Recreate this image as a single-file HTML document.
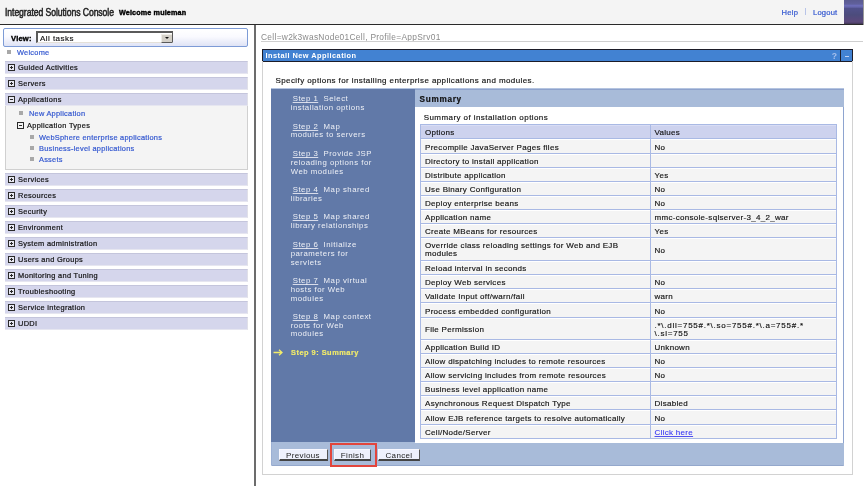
<!DOCTYPE html><html><head><meta charset='utf-8'><style>
*{margin:0;padding:0;box-sizing:border-box}
html,body{width:864px;height:486px;overflow:hidden;background:#fff;font-family:"Liberation Sans", sans-serif;}
body{filter:blur(0.3px)}
.a{position:absolute;white-space:nowrap}
.t{font-size:8px;letter-spacing:0.3px;color:#111;line-height:1;-webkit-text-stroke:0.15px #111}
.nav{font-size:7.4px;letter-spacing:0.32px;color:#111;line-height:1;-webkit-text-stroke:0.2px}
.lnk{color:#3458d0;letter-spacing:0.25px}
.bar{position:absolute;left:5px;width:243px;height:13px;background:#d5d6ec;border-top:1px solid #c4c5dc;border-bottom:1px solid #e6e6f0;border-right:1px solid #e0e0e8}
.ico{position:absolute;left:8px;width:7px;height:7px;border:1px solid #333;background:#e4e4f0}
.ico:before{content:"";position:absolute;left:0px;top:2px;width:5px;height:1px;background:#333}
.ico.p:after{content:"";position:absolute;left:2px;top:0px;width:1px;height:5px;background:#333}
.bul{position:absolute;width:4px;height:4px;background:#a8a8a8}
.row{position:absolute;left:421px;width:416px;background:#f4f4f4;border-bottom:1px solid #a9b9e4}
.step{font-size:7.8px;letter-spacing:0.5px;color:#eef0f6;line-height:8.7px}
.step u{text-decoration:underline;text-decoration-skip-ink:none;text-decoration-color:#d8dcea;text-underline-offset:1px}
.btn{position:absolute;top:448.5px;height:12.5px;background:#eef0fc;border:1px solid #f8f8ff;border-right:1px solid #555;border-bottom:2px solid #444;font-size:8px;letter-spacing:0.35px;color:#222;text-align:center;line-height:11.5px;padding-top:0.5px}
</style></head><body>
<div class='a' style='left:0;top:0;width:864px;height:24px;background:#f4f4f4'></div>
<div class='a' style='left:0;top:24px;width:863px;height:1px;background:#2a2a2a'></div>
<div class='a' style='left:5px;top:6.2px;font-size:10.5px;line-height:12px;color:#222;transform:scaleX(0.825);transform-origin:0 0;letter-spacing:-0.1px;-webkit-text-stroke:0.5px #222'>Integrated Solutions Console</div>
<div class='a' style='left:119px;top:9px;font-size:7.2px;line-height:8px;font-weight:bold;color:#000;letter-spacing:0.15px;-webkit-text-stroke:0.4px #000'>Welcome muleman</div>
<div class='a lnk' style='left:781.5px;top:8.7px;font-size:7.6px;line-height:8px;letter-spacing:0.3px;-webkit-text-stroke:0.2px #3458d0'>Help</div>
<div class='a' style='left:805px;top:8px;width:1px;height:7px;background:#b8c4e8'></div>
<div class='a lnk' style='left:813px;top:8.7px;font-size:7.6px;line-height:8px;letter-spacing:0.2px;-webkit-text-stroke:0.2px #3458d0'>Logout</div>
<div class='a' style='left:844px;top:0;width:19px;height:24px;background:linear-gradient(180deg,#5a5a90 0px,#60609c 4px,#6c6cb8 5.5px,#6666ac 7px,#50508a 8.5px,#4c4c7c 15px,#56497c 19px,#5c4a7a 22px,#403654 24px)'></div><div class='a' style='left:863px;top:0;width:1px;height:25px;background:#9a9a9a'></div>
<div class='a' style='left:3px;top:28px;width:245px;height:19px;border:1px solid #7d9bd6;border-radius:2px;background:linear-gradient(180deg,#ffffff 0%,#fafaff 45%,#dfe3f5 100%)'></div>
<div class='a' style='left:11px;top:34.8px;font-size:7.6px;line-height:7px;font-weight:bold;color:#000;letter-spacing:0.2px;-webkit-text-stroke:0.35px #000'>View:</div>
<div class='a' style='left:36px;top:31px;width:137px;height:12px;background:#fff;border-top:2px solid #5a5a5a;border-left:2px solid #5a5a5a;border-right:1.5px solid #5a5a5a;border-bottom:1px solid #e4e0d8'></div>
<div class='a' style='left:40px;top:35px;font-size:8px;line-height:7px;color:#111;letter-spacing:0.45px;-webkit-text-stroke:0.15px #111'>All tasks</div>
<div class='a' style='left:161px;top:33.5px;width:10.5px;height:9px;background:#d4d0c8;border-top:1px solid #eeece6;border-left:1px solid #eeece6;border-bottom:1.5px solid #5a5a5a'></div>
<div class='a' style='left:164.6px;top:37.3px;width:0;height:0;border-left:2px solid transparent;border-right:2px solid transparent;border-top:2.5px solid #111'></div>
<div class='bul' style='left:7px;top:50px'></div>
<div class='a nav lnk' style='left:17px;top:48.8px'>Welcome</div>
<div class='bar' style='top:61px'></div>
<svg class='a' style='left:8px;top:63.5px' width='7' height='7' viewBox='0 0 7 7'><rect x='0.5' y='0.5' width='6' height='6' fill='#e8e8f2' stroke='#2a2a2a' stroke-width='1'/><path d='M2 3.5H5' stroke='#2a2a2a' stroke-width='1'/><path d='M3.5 2V5' stroke='#2a2a2a' stroke-width='1'/></svg>
<div class='a nav' style='left:18px;top:63.5px'>Guided Activities</div>
<div class='bar' style='top:77px'></div>
<svg class='a' style='left:8px;top:79.5px' width='7' height='7' viewBox='0 0 7 7'><rect x='0.5' y='0.5' width='6' height='6' fill='#e8e8f2' stroke='#2a2a2a' stroke-width='1'/><path d='M2 3.5H5' stroke='#2a2a2a' stroke-width='1'/><path d='M3.5 2V5' stroke='#2a2a2a' stroke-width='1'/></svg>
<div class='a nav' style='left:18px;top:79.5px'>Servers</div>
<div class='bar' style='top:93px'></div>
<svg class='a' style='left:8px;top:95.5px' width='7' height='7' viewBox='0 0 7 7'><rect x='0.5' y='0.5' width='6' height='6' fill='#e8e8f2' stroke='#2a2a2a' stroke-width='1'/><path d='M2 3.5H5' stroke='#2a2a2a' stroke-width='1'/></svg>
<div class='a nav' style='left:18px;top:95.5px'>Applications</div>
<div class='a' style='left:5px;top:105.5px;width:243px;height:64.5px;background:#f4f4f4;border:1px solid #d0d0d0;border-top:none'></div>
<div class='bul' style='left:19px;top:111px'></div>
<div class='a nav lnk' style='left:29px;top:109.8px'>New Application</div>
<svg class='a' style='left:17px;top:122px' width='7' height='7' viewBox='0 0 7 7'><rect x='0.5' y='0.5' width='6' height='6' fill='#f4f4f4' stroke='#2a2a2a' stroke-width='1'/><path d='M2 3.5H5' stroke='#2a2a2a' stroke-width='1'/></svg>
<div class='a nav' style='left:27px;top:121.8px'>Application Types</div>
<div class='bul' style='left:30px;top:134.5px'></div>
<div class='a nav lnk' style='left:39px;top:133.8px'>WebSphere enterprise applications</div>
<div class='bul' style='left:30px;top:145.6px'></div>
<div class='a nav lnk' style='left:39px;top:144.9px'>Business-level applications</div>
<div class='bul' style='left:30px;top:156.7px'></div>
<div class='a nav lnk' style='left:39px;top:156.0px'>Assets</div>
<div class='bar' style='top:173px'></div>
<svg class='a' style='left:8px;top:175.5px' width='7' height='7' viewBox='0 0 7 7'><rect x='0.5' y='0.5' width='6' height='6' fill='#e8e8f2' stroke='#2a2a2a' stroke-width='1'/><path d='M2 3.5H5' stroke='#2a2a2a' stroke-width='1'/><path d='M3.5 2V5' stroke='#2a2a2a' stroke-width='1'/></svg>
<div class='a nav' style='left:18px;top:175.5px'>Services</div>
<div class='bar' style='top:189px'></div>
<svg class='a' style='left:8px;top:191.5px' width='7' height='7' viewBox='0 0 7 7'><rect x='0.5' y='0.5' width='6' height='6' fill='#e8e8f2' stroke='#2a2a2a' stroke-width='1'/><path d='M2 3.5H5' stroke='#2a2a2a' stroke-width='1'/><path d='M3.5 2V5' stroke='#2a2a2a' stroke-width='1'/></svg>
<div class='a nav' style='left:18px;top:191.5px'>Resources</div>
<div class='bar' style='top:205px'></div>
<svg class='a' style='left:8px;top:207.5px' width='7' height='7' viewBox='0 0 7 7'><rect x='0.5' y='0.5' width='6' height='6' fill='#e8e8f2' stroke='#2a2a2a' stroke-width='1'/><path d='M2 3.5H5' stroke='#2a2a2a' stroke-width='1'/><path d='M3.5 2V5' stroke='#2a2a2a' stroke-width='1'/></svg>
<div class='a nav' style='left:18px;top:207.5px'>Security</div>
<div class='bar' style='top:221px'></div>
<svg class='a' style='left:8px;top:223.5px' width='7' height='7' viewBox='0 0 7 7'><rect x='0.5' y='0.5' width='6' height='6' fill='#e8e8f2' stroke='#2a2a2a' stroke-width='1'/><path d='M2 3.5H5' stroke='#2a2a2a' stroke-width='1'/><path d='M3.5 2V5' stroke='#2a2a2a' stroke-width='1'/></svg>
<div class='a nav' style='left:18px;top:223.5px'>Environment</div>
<div class='bar' style='top:237px'></div>
<svg class='a' style='left:8px;top:239.5px' width='7' height='7' viewBox='0 0 7 7'><rect x='0.5' y='0.5' width='6' height='6' fill='#e8e8f2' stroke='#2a2a2a' stroke-width='1'/><path d='M2 3.5H5' stroke='#2a2a2a' stroke-width='1'/><path d='M3.5 2V5' stroke='#2a2a2a' stroke-width='1'/></svg>
<div class='a nav' style='left:18px;top:239.5px'>System administration</div>
<div class='bar' style='top:253px'></div>
<svg class='a' style='left:8px;top:255.5px' width='7' height='7' viewBox='0 0 7 7'><rect x='0.5' y='0.5' width='6' height='6' fill='#e8e8f2' stroke='#2a2a2a' stroke-width='1'/><path d='M2 3.5H5' stroke='#2a2a2a' stroke-width='1'/><path d='M3.5 2V5' stroke='#2a2a2a' stroke-width='1'/></svg>
<div class='a nav' style='left:18px;top:255.5px'>Users and Groups</div>
<div class='bar' style='top:269px'></div>
<svg class='a' style='left:8px;top:271.5px' width='7' height='7' viewBox='0 0 7 7'><rect x='0.5' y='0.5' width='6' height='6' fill='#e8e8f2' stroke='#2a2a2a' stroke-width='1'/><path d='M2 3.5H5' stroke='#2a2a2a' stroke-width='1'/><path d='M3.5 2V5' stroke='#2a2a2a' stroke-width='1'/></svg>
<div class='a nav' style='left:18px;top:271.5px'>Monitoring and Tuning</div>
<div class='bar' style='top:285px'></div>
<svg class='a' style='left:8px;top:287.5px' width='7' height='7' viewBox='0 0 7 7'><rect x='0.5' y='0.5' width='6' height='6' fill='#e8e8f2' stroke='#2a2a2a' stroke-width='1'/><path d='M2 3.5H5' stroke='#2a2a2a' stroke-width='1'/><path d='M3.5 2V5' stroke='#2a2a2a' stroke-width='1'/></svg>
<div class='a nav' style='left:18px;top:287.5px'>Troubleshooting</div>
<div class='bar' style='top:301px'></div>
<svg class='a' style='left:8px;top:303.5px' width='7' height='7' viewBox='0 0 7 7'><rect x='0.5' y='0.5' width='6' height='6' fill='#e8e8f2' stroke='#2a2a2a' stroke-width='1'/><path d='M2 3.5H5' stroke='#2a2a2a' stroke-width='1'/><path d='M3.5 2V5' stroke='#2a2a2a' stroke-width='1'/></svg>
<div class='a nav' style='left:18px;top:303.5px'>Service integration</div>
<div class='bar' style='top:317px'></div>
<svg class='a' style='left:8px;top:319.5px' width='7' height='7' viewBox='0 0 7 7'><rect x='0.5' y='0.5' width='6' height='6' fill='#e8e8f2' stroke='#2a2a2a' stroke-width='1'/><path d='M2 3.5H5' stroke='#2a2a2a' stroke-width='1'/><path d='M3.5 2V5' stroke='#2a2a2a' stroke-width='1'/></svg>
<div class='a nav' style='left:18px;top:319.5px'>UDDI</div>
<div class='a' style='left:254px;top:25px;width:2px;height:461px;background:#6c6c6c'></div>
<div class='a' style='left:261px;top:32.8px;font-size:8.4px;line-height:8px;color:#8a8a8a;letter-spacing:0.3px'>Cell=w2k3wasNode01Cell, Profile=AppSrv01</div>
<div class='a' style='left:261px;top:41px;width:602px;height:1px;background:#cfcfcf'></div>
<div class='a' style='left:262px;top:49px;width:591px;height:13px;background:#4282d2;border:1px solid #1c1c28'></div>
<div class='a' style='left:265.5px;top:52px;font-size:7.4px;line-height:7px;font-weight:bold;color:#fff;letter-spacing:0.45px'>Install New Application</div>
<div class='a' style='left:831.8px;top:51.6px;font-size:8.6px;line-height:8px;font-weight:bold;color:#a8c0ec'>?</div>
<div class='a' style='left:840px;top:50px;width:1px;height:11px;background:#1c1c28'></div>
<div class='a' style='left:844.5px;top:56px;width:4.5px;height:1.3px;background:#c0d2f2'></div>
<div class='a' style='left:262px;top:61px;width:591px;height:414px;border:1px solid #d2d2d2;border-top:none'></div>
<div class='a t' style='left:275.5px;top:76.5px;letter-spacing:0.41px'>Specify options for installing enterprise applications and modules.</div>
<div class='a' style='left:271px;top:88px;width:573px;height:378px;background:#a8bbd9;border-bottom:1px solid #94a8cc;border-left:1px solid #9cb0d4;border-radius:0 0 1px 1px;border-top:1px solid #b4c4e0'></div>
<div class='a' style='left:271px;top:89px;width:144px;height:353px;background:#6179a8'></div>
<div class='a' style='left:415px;top:89px;width:429px;height:354px;background:#fff;border-right:1px solid #8ea4d0'></div>
<div class='a' style='left:415px;top:89px;width:429px;height:18px;background:#a8bbd9;border-top:1px solid #8ea2cc'></div>
<div class='a' style='left:419.5px;top:95.7px;font-size:8.2px;line-height:7px;font-weight:bold;color:#111;letter-spacing:0.72px;-webkit-text-stroke:0.2px #111'>Summary</div>
<div class='a t' style='left:423.7px;top:114.4px;letter-spacing:0.43px'>Summary of installation options</div>
<div class='a step' style='left:292.7px;top:95.0px'><u>Step 1</u>&nbsp; Select</div>
<div class='a step' style='left:290.7px;top:103.7px'>installation options</div>
<div class='a step' style='left:292.7px;top:122.6px'><u>Step 2</u>&nbsp; Map</div>
<div class='a step' style='left:290.7px;top:131.29999999999998px'>modules to servers</div>
<div class='a step' style='left:292.7px;top:150.1px'><u>Step 3</u>&nbsp; Provide JSP</div>
<div class='a step' style='left:290.7px;top:158.79999999999998px'>reloading options for</div>
<div class='a step' style='left:290.7px;top:167.5px'>Web modules</div>
<div class='a step' style='left:292.7px;top:185.79999999999998px'><u>Step 4</u>&nbsp; Map shared</div>
<div class='a step' style='left:290.7px;top:194.49999999999997px'>libraries</div>
<div class='a step' style='left:292.7px;top:213.4px'><u>Step 5</u>&nbsp; Map shared</div>
<div class='a step' style='left:290.7px;top:222.1px'>library relationships</div>
<div class='a step' style='left:292.7px;top:241.29999999999998px'><u>Step 6</u>&nbsp; Initialize</div>
<div class='a step' style='left:290.7px;top:249.99999999999997px'>parameters for</div>
<div class='a step' style='left:290.7px;top:258.7px'>servlets</div>
<div class='a step' style='left:292.7px;top:277.20000000000005px'><u>Step 7</u>&nbsp; Map virtual</div>
<div class='a step' style='left:290.7px;top:285.90000000000003px'>hosts for Web</div>
<div class='a step' style='left:290.7px;top:294.6px'>modules</div>
<div class='a step' style='left:292.7px;top:313.0px'><u>Step 8</u>&nbsp; Map context</div>
<div class='a step' style='left:290.7px;top:321.7px'>roots for Web</div>
<div class='a step' style='left:290.7px;top:330.4px'>modules</div>
<svg class='a' style='left:272.5px;top:349px' width='10' height='7' viewBox='0 0 10 7'><path d='M0.5 3.5H9M6 0.7L9 3.5L6 6.3' stroke='#f2ec6a' stroke-width='1.3' fill='none'/></svg>
<div class='a' style='left:291px;top:349px;font-size:7.4px;line-height:7px;font-weight:bold;color:#f2ec6a;letter-spacing:0.5px;-webkit-text-stroke:0.15px #f2ec6a'>Step 9: Summary</div>
<div class='a' style='left:420px;top:124px;width:417px;height:315px;background:#a9b9e4'></div>
<div class='a' style='left:421px;top:125px;width:229px;height:13px;background:#cdd2ee;border-top:1px solid #d8dcf4'></div>
<div class='a' style='left:651px;top:125px;width:185px;height:13px;background:#cdd2ee;border-top:1px solid #d8dcf4'></div>
<div class='a t' style='left:425px;top:128.8px'>Options</div>
<div class='a t' style='left:654.5px;top:128.8px'>Values</div>
<div class='a' style='left:421px;top:139px;width:229px;height:14px;background:#f4f4f4;border-top:1px solid #fff'></div>
<div class='a' style='left:651px;top:139px;width:185px;height:14px;background:#f4f4f4;border-top:1px solid #fff'></div>
<div class='a t' style='left:425px;top:143.5px'>Precompile JavaServer Pages files</div>
<div class='a t' style='left:654.5px;top:143.5px'>No</div>
<div class='a' style='left:421px;top:154px;width:229px;height:13px;background:#f4f4f4;border-top:1px solid #fff'></div>
<div class='a' style='left:651px;top:154px;width:185px;height:13px;background:#f4f4f4;border-top:1px solid #fff'></div>
<div class='a t' style='left:425px;top:158.0px'>Directory to install application</div>
<div class='a' style='left:421px;top:168px;width:229px;height:13px;background:#f4f4f4;border-top:1px solid #fff'></div>
<div class='a' style='left:651px;top:168px;width:185px;height:13px;background:#f4f4f4;border-top:1px solid #fff'></div>
<div class='a t' style='left:425px;top:172.0px'>Distribute application</div>
<div class='a t' style='left:654.5px;top:172.0px'>Yes</div>
<div class='a' style='left:421px;top:182px;width:229px;height:13px;background:#f4f4f4;border-top:1px solid #fff'></div>
<div class='a' style='left:651px;top:182px;width:185px;height:13px;background:#f4f4f4;border-top:1px solid #fff'></div>
<div class='a t' style='left:425px;top:186.0px'>Use Binary Configuration</div>
<div class='a t' style='left:654.5px;top:186.0px'>No</div>
<div class='a' style='left:421px;top:196px;width:229px;height:13px;background:#f4f4f4;border-top:1px solid #fff'></div>
<div class='a' style='left:651px;top:196px;width:185px;height:13px;background:#f4f4f4;border-top:1px solid #fff'></div>
<div class='a t' style='left:425px;top:200.0px'>Deploy enterprise beans</div>
<div class='a t' style='left:654.5px;top:200.0px'>No</div>
<div class='a' style='left:421px;top:210px;width:229px;height:13px;background:#f4f4f4;border-top:1px solid #fff'></div>
<div class='a' style='left:651px;top:210px;width:185px;height:13px;background:#f4f4f4;border-top:1px solid #fff'></div>
<div class='a t' style='left:425px;top:214.0px'>Application name</div>
<div class='a t' style='left:654.5px;top:214.0px'>mmc-console-sqlserver-3_4_2_war</div>
<div class='a' style='left:421px;top:224px;width:229px;height:13px;background:#f4f4f4;border-top:1px solid #fff'></div>
<div class='a' style='left:651px;top:224px;width:185px;height:13px;background:#f4f4f4;border-top:1px solid #fff'></div>
<div class='a t' style='left:425px;top:228.0px'>Create MBeans for resources</div>
<div class='a t' style='left:654.5px;top:228.0px'>Yes</div>
<div class='a' style='left:421px;top:238px;width:229px;height:22px;background:#f4f4f4;border-top:1px solid #fff'></div>
<div class='a' style='left:651px;top:238px;width:185px;height:22px;background:#f4f4f4;border-top:1px solid #fff'></div>
<div class='a t' style='left:425px;top:242.2px;line-height:8.2px;white-space:nowrap'>Override class reloading settings for Web and EJB<br>modules</div>
<div class='a t' style='left:654.5px;top:246.5px'>No</div>
<div class='a' style='left:421px;top:261px;width:229px;height:13px;background:#f4f4f4;border-top:1px solid #fff'></div>
<div class='a' style='left:651px;top:261px;width:185px;height:13px;background:#f4f4f4;border-top:1px solid #fff'></div>
<div class='a t' style='left:425px;top:265.0px'>Reload interval in seconds</div>
<div class='a' style='left:421px;top:275px;width:229px;height:13px;background:#f4f4f4;border-top:1px solid #fff'></div>
<div class='a' style='left:651px;top:275px;width:185px;height:13px;background:#f4f4f4;border-top:1px solid #fff'></div>
<div class='a t' style='left:425px;top:279.0px'>Deploy Web services</div>
<div class='a t' style='left:654.5px;top:279.0px'>No</div>
<div class='a' style='left:421px;top:289px;width:229px;height:13px;background:#f4f4f4;border-top:1px solid #fff'></div>
<div class='a' style='left:651px;top:289px;width:185px;height:13px;background:#f4f4f4;border-top:1px solid #fff'></div>
<div class='a t' style='left:425px;top:293.0px'>Validate Input off/warn/fail</div>
<div class='a t' style='left:654.5px;top:293.0px'>warn</div>
<div class='a' style='left:421px;top:303px;width:229px;height:14px;background:#f4f4f4;border-top:1px solid #fff'></div>
<div class='a' style='left:651px;top:303px;width:185px;height:14px;background:#f4f4f4;border-top:1px solid #fff'></div>
<div class='a t' style='left:425px;top:307.5px'>Process embedded configuration</div>
<div class='a t' style='left:654.5px;top:307.5px'>No</div>
<div class='a' style='left:421px;top:318px;width:229px;height:21px;background:#f4f4f4;border-top:1px solid #fff'></div>
<div class='a' style='left:651px;top:318px;width:185px;height:21px;background:#f4f4f4;border-top:1px solid #fff'></div>
<div class='a t' style='left:425px;top:326.0px'>File Permission</div>
<div class='a t' style='left:654.5px;top:322.2px;line-height:8.2px;letter-spacing:0.75px'>.*\.dll=755#.*\.so=755#.*\.a=755#.*<br>\.sl=755</div>
<div class='a' style='left:421px;top:340px;width:229px;height:13px;background:#f4f4f4;border-top:1px solid #fff'></div>
<div class='a' style='left:651px;top:340px;width:185px;height:13px;background:#f4f4f4;border-top:1px solid #fff'></div>
<div class='a t' style='left:425px;top:344.0px'>Application Build ID</div>
<div class='a t' style='left:654.5px;top:344.0px'>Unknown</div>
<div class='a' style='left:421px;top:354px;width:229px;height:13px;background:#f4f4f4;border-top:1px solid #fff'></div>
<div class='a' style='left:651px;top:354px;width:185px;height:13px;background:#f4f4f4;border-top:1px solid #fff'></div>
<div class='a t' style='left:425px;top:358.0px'>Allow dispatching includes to remote resources</div>
<div class='a t' style='left:654.5px;top:358.0px'>No</div>
<div class='a' style='left:421px;top:368px;width:229px;height:13px;background:#f4f4f4;border-top:1px solid #fff'></div>
<div class='a' style='left:651px;top:368px;width:185px;height:13px;background:#f4f4f4;border-top:1px solid #fff'></div>
<div class='a t' style='left:425px;top:372.0px'>Allow servicing includes from remote resources</div>
<div class='a t' style='left:654.5px;top:372.0px'>No</div>
<div class='a' style='left:421px;top:382px;width:229px;height:13px;background:#f4f4f4;border-top:1px solid #fff'></div>
<div class='a' style='left:651px;top:382px;width:185px;height:13px;background:#f4f4f4;border-top:1px solid #fff'></div>
<div class='a t' style='left:425px;top:386.0px'>Business level application name</div>
<div class='a' style='left:421px;top:396px;width:229px;height:13px;background:#f4f4f4;border-top:1px solid #fff'></div>
<div class='a' style='left:651px;top:396px;width:185px;height:13px;background:#f4f4f4;border-top:1px solid #fff'></div>
<div class='a t' style='left:425px;top:400.0px'>Asynchronous Request Dispatch Type</div>
<div class='a t' style='left:654.5px;top:400.0px'>Disabled</div>
<div class='a' style='left:421px;top:410px;width:229px;height:14px;background:#f4f4f4;border-top:1px solid #fff'></div>
<div class='a' style='left:651px;top:410px;width:185px;height:14px;background:#f4f4f4;border-top:1px solid #fff'></div>
<div class='a t' style='left:425px;top:414.5px'>Allow EJB reference targets to resolve automatically</div>
<div class='a t' style='left:654.5px;top:414.5px'>No</div>
<div class='a' style='left:421px;top:425px;width:229px;height:13px;background:#f4f4f4;border-top:1px solid #fff'></div>
<div class='a' style='left:651px;top:425px;width:185px;height:13px;background:#f4f4f4;border-top:1px solid #fff'></div>
<div class='a t' style='left:425px;top:429.0px'>Cell/Node/Server</div>
<div class='a t' style='left:654.5px;top:429.0px'><u style='color:#3535f5;-webkit-text-stroke:0.1px #3535f5;text-decoration-color:#5050f0;text-decoration-skip-ink:none'>Click here</u></div>
<div class='btn' style='left:278.5px;width:49px'>Previous</div>
<div class='btn' style='left:334px;width:37px'>Finish</div>
<div class='btn' style='left:378px;width:42px'>Cancel</div>
<div class='a' style='left:330px;top:443px;width:47px;height:24px;border:2.3px solid #e2453c'></div>
</body></html>
